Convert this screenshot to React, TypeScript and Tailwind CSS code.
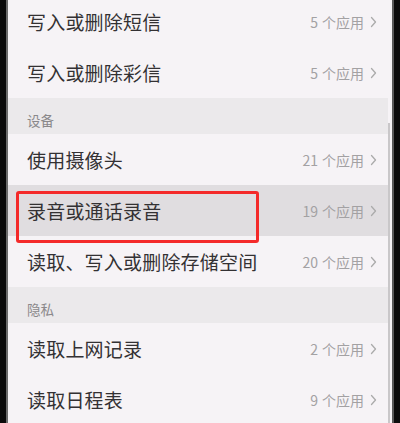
import React from 'react';

type Row = { kind: 'row'; title: string; count: number } | { kind: 'header'; title: string };

const rows: Row[] = [
  { kind: 'row', title: '写入或删除短信', count: 5 },
  { kind: 'row', title: '写入或删除彩信', count: 5 },
  { kind: 'header', title: '设备' },
  { kind: 'row', title: '使用摄像头', count: 21 },
  { kind: 'row', title: '录音或通话录音', count: 19 },
  { kind: 'row', title: '读取、写入或删除存储空间', count: 20 },
  { kind: 'header', title: '隐私' },
  { kind: 'row', title: '读取上网记录', count: 2 },
  { kind: 'row', title: '读取日程表', count: 9 },
];

const HIGHLIGHT = '录音或通话录音';

function Chevron() {
  return (
    <svg width="7" height="12" viewBox="0 0 7 12" className="ml-[6px] shrink-0">
      <polyline points="1.5,1.5 5.5,6 1.5,10.5" fill="none" stroke="#ababab" strokeWidth="1.3" strokeLinecap="round" strokeLinejoin="round" />
    </svg>
  );
}

function PermissionRow({ title, count }: { title: string; count: number }) {
  const active = title === HIGHLIGHT;
  return (
    <div
      className={`flex items-center h-[51px] pl-[19px] pr-[11px] ${
        active ? 'bg-[#e0dde0]' : 'bg-[#f6f3f6]'
      }`}
    >
      <span className="flex-1 text-[19px] leading-[24px] text-[#333133] tracking-[0.2px]">{title}</span>
      <span className="text-[14px] leading-[18px] text-[#a3a1a3]">
        {count}
        <span className="ml-[4px]">个应用</span>
      </span>
      <Chevron />
    </div>
  );
}

function SectionHeader({ title }: { title: string }) {
  return (
    <div className="flex items-end h-[36px] pl-[19px] pb-[6px] bg-[#ebe9eb]">
      <span className="text-[13.5px] leading-[16px] text-[#8a888a]">{title}</span>
    </div>
  );
}

export default function App() {
  return (
    <div
      className="flex w-[400px] h-[423px] overflow-hidden bg-[#0c0c0c]"
      style={{ fontFamily: '"Noto Sans CJK SC", "Noto Sans", sans-serif' }}
    >
      <div className="w-[6px] shrink-0 bg-[#0a0a0a]" />
      <div className="w-[2px] shrink-0 bg-[#6b6b6b]" />
      <div className="relative flex flex-1 bg-[#f6f3f6]">
        <div className="flex-1 mt-[-4px]">
          {rows.map((r, i) =>
            r.kind === 'header' ? (
              <SectionHeader key={i} title={r.title} />
            ) : (
              <PermissionRow key={i} title={r.title} count={r.count} />
            )
          )}
        </div>
        <div className="w-[4px] shrink-0 pt-[123px]">
          <div className="w-[2px] h-full bg-[#c9c7c9]" />
        </div>
        <div className="absolute left-[8px] top-[191px] w-[243px] h-[52px] border-[3px] border-[#f42a2a] rounded-[3px]" />
      </div>
      <div className="w-[2px] shrink-0 bg-[#5a5a5a]" />
      <div className="w-[6px] shrink-0 bg-[#0c0c0c]" />
    </div>
  );
}
